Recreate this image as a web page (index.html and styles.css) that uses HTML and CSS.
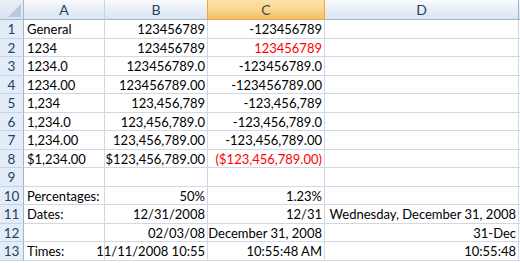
FILE: index.html
```
<!DOCTYPE html>
<html>
<head>
<meta charset="utf-8">
<link rel="stylesheet" href="styles.css">
</head>
<body>
<div class="sheet">
  <div class="hd corner"><span class="tri"></span></div>
  <div class="hd col">A</div>
  <div class="hd col">B</div>
  <div class="hd col sel">C</div>
  <div class="hd col">D</div>
  <div class="hd col last"></div>

  <div class="rh">1</div><div class="c">General</div><div class="c r">123456789</div><div class="c r">-123456789</div><div class="c"></div><div class="c e"></div>
  <div class="rh">2</div><div class="c">1234</div><div class="c r">123456789</div><div class="c r red">123456789</div><div class="c"></div><div class="c e"></div>
  <div class="rh">3</div><div class="c">1234.0</div><div class="c r">123456789.0</div><div class="c r">-123456789.0</div><div class="c"></div><div class="c e"></div>
  <div class="rh">4</div><div class="c">1234.00</div><div class="c r">123456789.00</div><div class="c r">-123456789.00</div><div class="c"></div><div class="c e"></div>
  <div class="rh">5</div><div class="c">1,234</div><div class="c r">123,456,789</div><div class="c r">-123,456,789</div><div class="c"></div><div class="c e"></div>
  <div class="rh">6</div><div class="c">1,234.0</div><div class="c r">123,456,789.0</div><div class="c r">-123,456,789.0</div><div class="c"></div><div class="c e"></div>
  <div class="rh">7</div><div class="c">1,234.00</div><div class="c r">123,456,789.00</div><div class="c r">-123,456,789.00</div><div class="c"></div><div class="c e"></div>
  <div class="rh">8</div><div class="c">$1,234.00</div><div class="c r">$123,456,789.00</div><div class="c r red">($123,456,789.00)</div><div class="c"></div><div class="c e"></div>
  <div class="rh">9</div><div class="c"></div><div class="c"></div><div class="c"></div><div class="c"></div><div class="c e"></div>
  <div class="rh">10</div><div class="c">Percentages:</div><div class="c r">50%</div><div class="c r">1.23%</div><div class="c"></div><div class="c e"></div>
  <div class="rh">11</div><div class="c">Dates:</div><div class="c r">12/31/2008</div><div class="c r">12/31</div><div class="c r">Wednesday, December 31, 2008</div><div class="c e"></div>
  <div class="rh">12</div><div class="c"></div><div class="c r">02/03/08</div><div class="c r">December 31, 2008</div><div class="c r">31-Dec</div><div class="c e"></div>
  <div class="rh">13</div><div class="c">Times:</div><div class="c r">11/11/2008 10:55</div><div class="c r">10:55:48 AM</div><div class="c r">10:55:48</div><div class="c e"></div>
</div>
</body>
</html>
```
FILE: styles.css
```
html, body {
  margin: 0;
  padding: 0;
  background: #ffffff;
  overflow: hidden;
}
.sheet {
  display: grid;
  grid-template-columns: 24px 81px 103px 117px 194px 1fr;
  grid-template-rows: 20px 19px 18px 19px 18px 19px 18px 19px 18px 19px 18px 19px 18px 19px;
  width: 520px;
  font-family: "Lato", "Open Sans", sans-serif;
  font-size: 13px;
  color: #000;
}
.hd {
  background: linear-gradient(#f9fbfd, #e6edf6 55%, #dbe4f0);
  border-right: 1px solid #c5d3e5;
  border-bottom: 1px solid #9eb6ce;
  color: #27415f;
  display: flex;
  align-items: center;
  justify-content: center;
  font-size: 14px;
  box-sizing: border-box;
}
.corner {
  position: relative;
  background: linear-gradient(#eaf0f8, #d9e3f0);
  border-right: 1px solid #9eb6ce;
}
.tri {
  position: absolute;
  right: 2px;
  bottom: 2px;
  width: 0;
  height: 0;
  border-left: 13px solid transparent;
  border-bottom: 13px solid #b8c9de;
}
.sel {
  background: linear-gradient(#fbe2a8, #f9d68c 55%, #f2bd6b);
  border-right: 1px solid #f2a93b;
  border-left: 1px solid #f2a93b;
  margin-left: -1px;
  border-bottom: 1px solid #f2a93b;
  color: #3b4a5c;
}
.last {
  border-right: none;
  border-left: 1px solid #9eb6ce;
  margin-left: -1px;
}
.rh {
  background: #e4ecf7;
  border-right: 1px solid #9eb6ce;
  border-bottom: 1px solid #c5d3e5;
  color: #27415f;
  display: flex;
  align-items: center;
  justify-content: center;
  font-size: 13.5px;
  box-sizing: border-box;
}
.c {
  border-right: 1px solid #d0d7e5;
  border-bottom: 1px solid #d0d7e5;
  box-sizing: border-box;
  display: flex;
  align-items: center;
  padding: 0 2px 0 3px;
  white-space: nowrap;
  overflow: visible;
}
.r {
  justify-content: flex-end;
}
.red {
  color: #ff0000;
}
.e {
  border-right: none;
}
```
